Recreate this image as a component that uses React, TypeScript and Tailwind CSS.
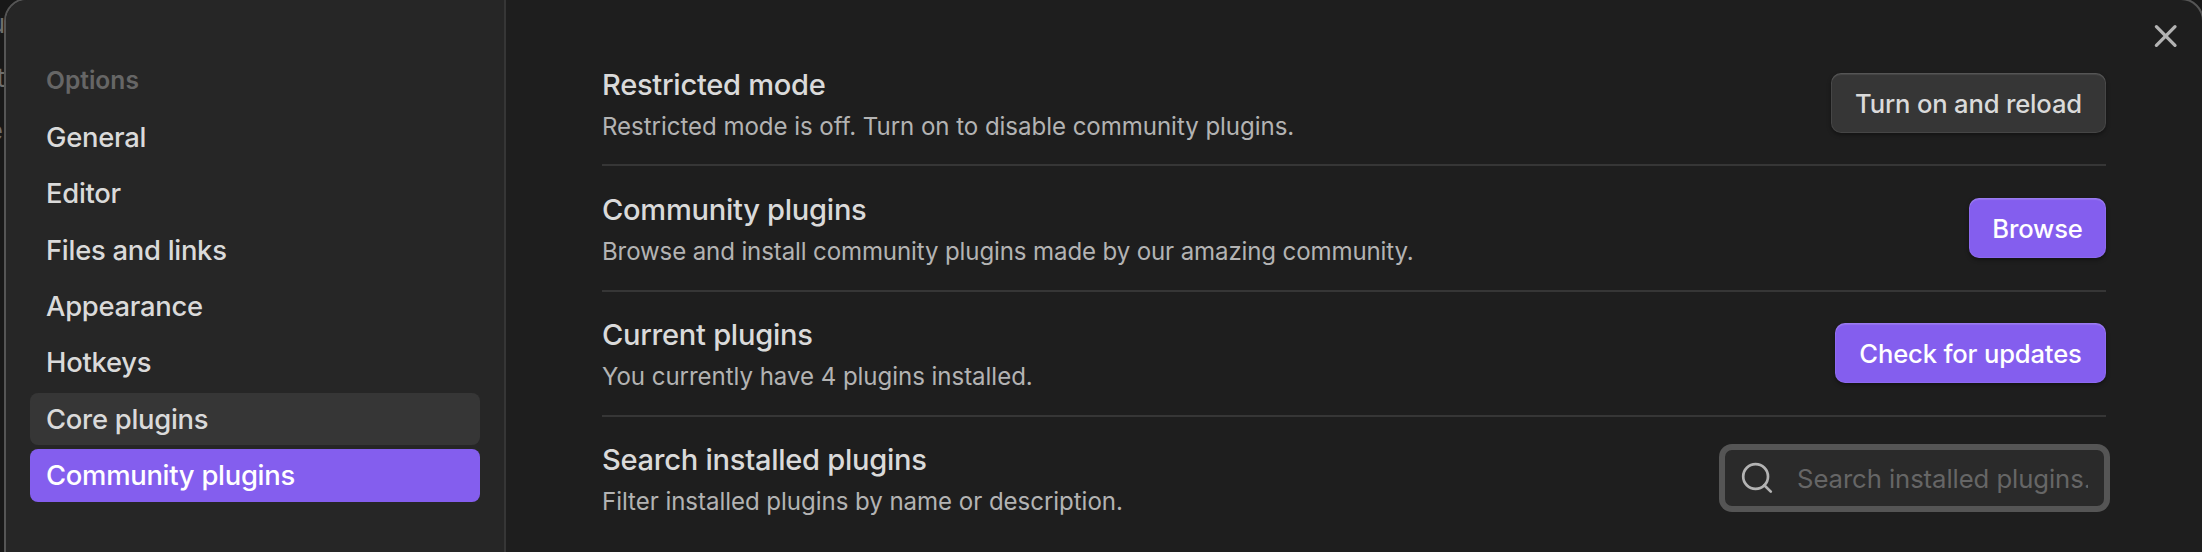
import type { ReactNode } from 'react';

const navItems = [
  { label: 'General', state: 'idle' },
  { label: 'Editor', state: 'idle' },
  { label: 'Files and links', state: 'idle' },
  { label: 'Appearance', state: 'idle' },
  { label: 'Hotkeys', state: 'idle' },
  { label: 'Core plugins', state: 'hover' },
  { label: 'Community plugins', state: 'active' },
];

const navStyles: Record<string, string> = {
  idle: 'text-[#dadada]',
  hover: 'bg-[#363636] text-[#dadada]',
  active: 'bg-[#845eee] text-white',
};

type SettingRowProps = {
  title: string;
  description: string;
  frame?: string;
  tracking?: string;
  children: ReactNode;
};

function SettingRow({ title, description, frame = 'h-[125.4px] border-[#363636]', tracking = 'tracking-[-0.04px]', children }: SettingRowProps) {
  return (
    <div className={`flex items-center justify-between border-t-2 ${frame}`}>
      <div className="mt-px flex flex-col gap-[5px]">
        <div className="text-[29.1px] leading-[42px] font-medium tracking-[-0.28px] text-[#dadada]">{title}</div>
        <div className={`text-[24.05px] leading-8 text-[#b3b3b3] ${tracking}`}>{description}</div>
      </div>
      {children}
    </div>
  );
}

function Button({ width, accent = false, children }: { width: string; accent?: boolean; children: ReactNode }) {
  const tone = accent
    ? 'bg-[#845eee] text-white shadow-[inset_0_2px_1px_rgba(255,255,255,0.12),inset_0_0_0_1px_rgba(255,255,255,0.07),0_2px_4px_rgba(0,0,0,0.4)]'
    : 'bg-[#363636] text-[#dadada] shadow-[inset_0_2px_1px_rgba(255,255,255,0.09),inset_0_0_0_1px_rgba(255,255,255,0.08),0_2px_4px_rgba(0,0,0,0.4)]';
  return (
    <button className={`flex h-[60px] items-center justify-center rounded-[10px] pt-px text-[25.6px] leading-[59px] font-medium tracking-[-0.17px] whitespace-nowrap ${width} ${tone}`}>
      {children}
    </button>
  );
}

export default function App() {
  return (
    <div className="relative h-[552px] w-[2202px] overflow-hidden bg-[#181818] font-['Inter','Liberation_Sans',sans-serif]">
      {/* Page text showing behind the modal's left edge */}
      <div className="absolute top-0 left-0 h-full w-1 overflow-hidden text-[26px] leading-8 text-[#6e6e6e]">
        <span className="absolute top-[7.5px] -right-px">u</span>
        <span className="absolute top-[61.5px] -right-px">t</span>
        <span className="absolute top-[114.5px] right-px">e</span>
      </div>

      <div className="relative -mt-0.5 ml-1 flex h-[600px] w-[2200px] overflow-hidden rounded-[23px] border-2 border-[#555555] bg-[#1e1e1e]">
        <nav className="flex w-[500px] shrink-0 flex-col border-r-2 border-[#363636] bg-[#262626] pt-[62px] pr-6 pl-6">
          <div className="mb-[13px] pl-4 text-[24.6px] leading-9 font-semibold text-[#666666]">Options</div>
          <div className="flex flex-col gap-[3.53px]">
            {navItems.map((item) => (
              <div key={item.label} className={`h-[52.8px] rounded-[8px] pl-4 text-[27.4px] leading-[52.8px] font-medium tracking-[-0.27px] ${navStyles[item.state]}`}>
                {item.label}
              </div>
            ))}
          </div>
        </nav>

        <main className="w-[1600px] pt-[39.8px] pl-24">
          <div className="w-[1504px]">
            <SettingRow frame="h-[124.4px] border-transparent" title="Restricted mode" description="Restricted mode is off. Turn on to disable community plugins.">
              <Button width="w-[275px]">Turn on and reload</Button>
            </SettingRow>
            <SettingRow tracking="tracking-[-0.12px]" title="Community plugins" description="Browse and install community plugins made by our amazing community.">
              <Button width="w-[137px]" accent>Browse</Button>
            </SettingRow>
            <SettingRow title="Current plugins" description="You currently have 4 plugins installed.">
              <Button width="w-[271px]" accent>Check for updates</Button>
            </SettingRow>
            <SettingRow frame="h-[124.6px] border-[#363636]" title="Search installed plugins" description="Filter installed plugins by name or description.">
              <div className="flex h-[60px] w-[383px] items-center rounded-[9px] border-2 border-[#555555] bg-[#2a2a2a] pl-[15px] ring-4 ring-[#555555]">
                <svg className="size-9 shrink-0" viewBox="0 0 36 36" fill="none" stroke="#b3b3b3" strokeWidth="2.7" strokeLinecap="round">
                  <circle cx="15.6" cy="16.5" r="12.4" />
                  <path d="M24.3 25.2 30.8 31.6" />
                </svg>
                <div className="ml-[21px] w-[291px] overflow-hidden pt-px text-[25.7px] leading-[56px] tracking-[-0.08px] whitespace-nowrap text-[#666666]">Search installed plugins...</div>
              </div>
            </SettingRow>
          </div>
        </main>
      </div>

      <button className="absolute top-[18px] left-[2148px] size-9" aria-label="Close">
        <svg className="size-9" viewBox="0 0 36 36" fill="none" stroke="#b3b3b3" strokeWidth="3.3" strokeLinecap="round">
          <path d="M8.4 8.7 27 27.3M27 8.7 8.4 27.3" />
        </svg>
      </button>
    </div>
  );
}
